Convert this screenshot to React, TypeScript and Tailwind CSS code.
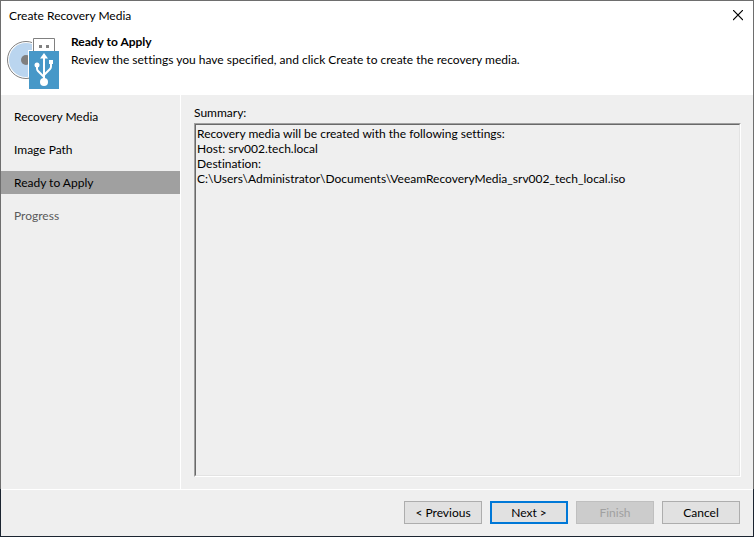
import React from 'react';

interface Step {
  title: string;
  state: 'done' | 'current' | 'pending';
}

const steps: Step[] = [
  { title: 'Recovery Media', state: 'done' },
  { title: 'Image Path', state: 'done' },
  { title: 'Ready to Apply', state: 'current' },
  { title: 'Progress', state: 'pending' },
];

const stepStyles = {
  done: 'text-black',
  current: 'bg-[#a0a0a0] text-black',
  pending: 'text-[#5a5a5a]',
};

const summary = [
  'Recovery media will be created with the following settings:',
  'Host: srv002.tech.local',
  'Destination:',
  'C:\\Users\\Administrator\\Documents\\VeeamRecoveryMedia_srv002_tech_local.iso',
].join('\n');

const MediaIcon: React.FC = () => (
  <svg width="52" height="52" viewBox="0 0 52 52" aria-hidden="true" className="shrink-0">
    {/* disc */}
    <circle cx="19" cy="22" r="18.5" fill="#fff" stroke="#808080" />
    <circle cx="19" cy="22" r="17" fill="#bad5ef" />
    <circle cx="19" cy="22" r="5" fill="#7f7f7f" />
    {/* usb plug */}
    <path d="M25 0h24v13H25z" fill="#fff" />
    <path d="M26.5 13V.5h21V13" fill="#fff" stroke="#808080" />
    <path d="M32 7h3v3h-3zM39 7h3v3h-3z" fill="#808080" />
    {/* usb body */}
    <path d="M21 12h5v1h-4v26h-1z" fill="#fff" />
    <path d="M22 13h30v38H22z" fill="#4798c8" />
    <path
      d="M37 19v26M30 27v3.500q0 1.500 1 2.500l6 6M44 24v4.500q0 1.500-1 2.500L37 37"
      fill="none"
      stroke="#fff"
      strokeWidth="2"
    />
    <path d="M37 15l4 5.500h-8z" fill="#fff" />
    <circle cx="30" cy="27" r="2.500" fill="#fff" />
    <path d="M42 22h4v4h-4z" fill="#fff" />
    <circle cx="37" cy="44" r="4" fill="#fff" />
  </svg>
);

const buttonBase = 'h-[23px] w-[78px] text-center leading-[20px]';

const App: React.FC = () => {
  return (
    <div className="flex min-h-screen flex-col bg-[#efefef] font-['Segoe_UI','Lato',sans-serif] text-[12px] leading-[18px] text-black [font-variant-ligatures:none]">
      <div className="flex grow flex-col border-x border-t border-[#6e6e6e]">
        <header className="bg-white pb-[5px]">
          <div className="flex h-[30px] items-center justify-between pl-2 pr-[10px]">
            <h1>Create Recovery Media</h1>
            <button type="button" aria-label="Close">
              <svg width="10" height="12" viewBox="0 0 10 12" aria-hidden="true">
                <path d="M0 0l10 10M10 0L0 10" fill="none" stroke="#000" strokeWidth="1.200" />
              </svg>
            </button>
          </div>
          <div className="flex gap-3 px-[6px] pt-[7px]">
            <MediaIcon />
            <div className="-mt-[5px]">
              <h2 className="font-bold">Ready to Apply</h2>
              <p>Review the settings you have specified, and click Create to create the recovery media.</p>
            </div>
          </div>
        </header>

        <div className="flex grow">
          <nav className="w-[180px] shrink-0 border-r border-white pt-[10px]">
            <ul className="flex flex-col gap-[10px]">
              {steps.map((step) => (
                <li
                  key={step.title}
                  aria-current={step.state === 'current' ? 'step' : undefined}
                  className={`h-[23px] pl-[13px] leading-[23px] ${stepStyles[step.state]}`}
                >
                  {step.title}
                </li>
              ))}
            </ul>
          </nav>

          <main className="flex grow flex-col pb-3 pl-[13px] pr-3 pt-[9px]">
            <label htmlFor="summary">Summary:</label>
            <div className="mt-px flex grow border border-b-white border-l-[#a0a0a0] border-r-white border-t-[#a0a0a0]">
              <textarea
                id="summary"
                readOnly
                value={summary}
                className="grow resize-none border border-b-[#e3e3e3] border-l-[#696969] border-r-[#e3e3e3] border-t-[#696969] px-px py-px leading-[15px] outline-none"
              />
            </div>
          </main>
        </div>
      </div>

      <footer className="flex border-x border-b border-[#1b2430]">
        <div className="flex grow justify-end gap-2 border-t border-white pb-3 pr-[13px] pt-[11px]">
          <button type="button" className={`${buttonBase} border border-[#adadad] bg-[#e1e1e1]`}>
            &lt; Previous
          </button>
          <button type="button" className={`${buttonBase} border-2 border-[#0078d7] bg-[#e1e1e1]`}>
            Next &gt;
          </button>
          <button
            type="button"
            disabled
            className={`${buttonBase} border border-[#bfbfbf] bg-[#cccccc] text-[#a0a0a0]`}
          >
            Finish
          </button>
          <button type="button" className={`${buttonBase} border border-[#adadad] bg-[#e1e1e1]`}>
            Cancel
          </button>
        </div>
      </footer>
    </div>
  );
};

export default App;
